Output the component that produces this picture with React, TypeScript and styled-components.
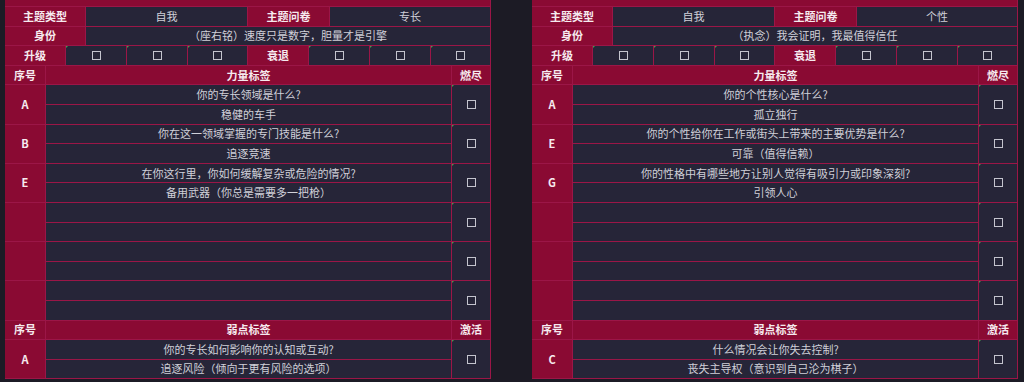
import React from 'react';
import styled, { createGlobalStyle, css } from 'styled-components';

const RED = '#8a0a33';
const DARK = '#262538';
const LINE = '#9b1647';
const BG = '#1c1b25';
const ROW = 19.6;

type Entry = { idx: string; question: string; answer: string };

type SheetData = {
  theme: string;
  identity: string;
  power: (Entry | null)[];
  weakness: Entry[];
};

const sheets: SheetData[] = [
  {
    theme: '专长',
    identity: '（座右铭）速度只是数字，胆量才是引擎',
    power: [
      { idx: 'A', question: '你的专长领域是什么?', answer: '稳健的车手' },
      { idx: 'B', question: '你在这一领域掌握的专门技能是什么?', answer: '追逐竞速' },
      { idx: 'E', question: '在你这行里，你如何缓解复杂或危险的情况?', answer: '备用武器（你总是需要多一把枪）' },
      null,
      null,
      null,
    ],
    weakness: [
      { idx: 'A', question: '你的专长如何影响你的认知或互动?', answer: '追逐风险（倾向于更有风险的选项）' },
    ],
  },
  {
    theme: '个性',
    identity: '（执念）我会证明，我最值得信任',
    power: [
      { idx: 'A', question: '你的个性核心是什么?', answer: '孤立独行' },
      { idx: 'E', question: '你的个性给你在工作或街头上带来的主要优势是什么?', answer: '可靠（值得信赖）' },
      { idx: 'G', question: '你的性格中有哪些地方让别人觉得有吸引力或印象深刻?', answer: '引领人心' },
      null,
      null,
      null,
    ],
    weakness: [
      { idx: 'C', question: '什么情况会让你失去控制?', answer: '丧失主导权（意识到自己沦为棋子）' },
    ],
  },
];

const GlobalStyle = createGlobalStyle`
  *, *::before, *::after { box-sizing: border-box; }
  body {
    margin: 0;
    background: ${BG};
    font-family: "Noto Sans CJK SC", "Liberation Sans", sans-serif;
    overflow: hidden;
  }
`;

const Page = styled.div`
  display: flex;
  gap: 41px;
  padding: 0 5px;
  height: 382px;
  overflow: hidden;
`;

const Sheet = styled.div`
  width: 486px;
  display: flex;
  flex-direction: column;
`;

const TopStrip = styled.div`
  height: 7px;
  background: ${RED};
  border-bottom: 1px solid ${LINE};
  border-right: 1px solid ${LINE};
`;

const Row = styled.div<{ $cols: string; $rows?: number }>`
  display: grid;
  grid-template-columns: ${(p) => p.$cols};
  grid-template-rows: repeat(${(p) => p.$rows ?? 1}, ${ROW}px);
`;

const Cell = styled.div<{ $tone: 'red' | 'dark'; $bold?: boolean; $span?: number; $mark?: boolean }>`
  position: relative;
  display: flex;
  align-items: center;
  justify-content: center;
  background: ${(p) => (p.$tone === 'red' ? RED : DARK)};
  border-right: 1px solid ${LINE};
  border-bottom: 1px solid ${LINE};
  font-size: 11px;
  line-height: 1;
  white-space: nowrap;
  color: ${(p) => (p.$bold ? '#f6eaef' : '#d0d0d8')};
  font-weight: ${(p) => (p.$bold ? 700 : 400)};
  ${(p) => p.$span && css`grid-row: span ${p.$span};`}
  ${(p) =>
    p.$mark &&
    css`
      &::before {
        content: '';
        position: absolute;
        top: 0;
        left: 0;
        border-top: 2px solid #4a9a4f;
        border-right: 2px solid transparent;
      }
    `}
`;

const Box = styled.span`
  display: inline-block;
  width: 9px;
  height: 9px;
  border: 1px solid #c4c4ce;
`;

const Check = () => <Box />;

const Group = ({ entry }: { entry: Entry | null }) => (
  <Row $cols="41px 406px 39px" $rows={2}>
    <Cell $tone="red" $bold $span={2}>{entry?.idx}</Cell>
    <Cell $tone="dark">{entry?.question}</Cell>
    <Cell $tone="dark" $span={2} $mark>
      <Check />
    </Cell>
    <Cell $tone="dark">{entry?.answer}</Cell>
  </Row>
);

const ThemeSheet = ({ data }: { data: SheetData }) => (
  <Sheet>
    <TopStrip />
    <Row $cols="81px 162px 82px 161px">
      <Cell $tone="red" $bold>主题类型</Cell>
      <Cell $tone="dark">自我</Cell>
      <Cell $tone="red" $bold>主题问卷</Cell>
      <Cell $tone="dark">{data.theme}</Cell>
    </Row>
    <Row $cols="81px 405px">
      <Cell $tone="red" $bold>身份</Cell>
      <Cell $tone="dark">{data.identity}</Cell>
    </Row>
    <Row $cols="61px 61px 61px 60px 61px 61px 61px 60px">
      <Cell $tone="red" $bold>升级</Cell>
      {[0, 1, 2].map((i) => (
        <Cell key={`u${i}`} $tone="dark" $mark><Check /></Cell>
      ))}
      <Cell $tone="red" $bold>衰退</Cell>
      {[0, 1, 2].map((i) => (
        <Cell key={`d${i}`} $tone="dark" $mark><Check /></Cell>
      ))}
    </Row>
    <Row $cols="41px 406px 39px">
      <Cell $tone="red" $bold>序号</Cell>
      <Cell $tone="red" $bold>力量标签</Cell>
      <Cell $tone="red" $bold>燃尽</Cell>
    </Row>
    {data.power.map((e, i) => (
      <Group key={`p${i}`} entry={e} />
    ))}
    <Row $cols="41px 406px 39px">
      <Cell $tone="red" $bold>序号</Cell>
      <Cell $tone="red" $bold>弱点标签</Cell>
      <Cell $tone="red" $bold>激活</Cell>
    </Row>
    {data.weakness.map((e, i) => (
      <Group key={`w${i}`} entry={e} />
    ))}
  </Sheet>
);

export default function App() {
  return (
    <>
      <GlobalStyle />
      <Page>
        {sheets.map((s, i) => (
          <ThemeSheet key={i} data={s} />
        ))}
      </Page>
    </>
  );
}
